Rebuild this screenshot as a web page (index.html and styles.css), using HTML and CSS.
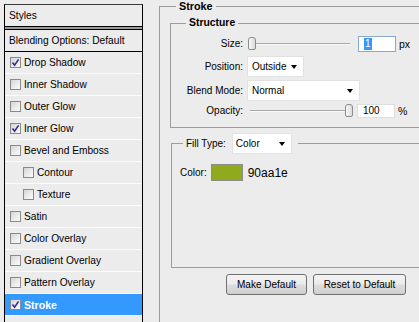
FILE: index.html
```html
<!DOCTYPE html>
<html>
<head>
<meta charset="utf-8">
<link rel="stylesheet" href="styles.css">
</head>
<body>
<div class="app">
  <div class="styles-panel">
    <div class="panel-head">Styles</div>
    <div class="head-rule"></div>
    <div class="blend-row">Blending Options: Default</div>
    <ul class="fx-list">
      <li class="fx"><span class="cb"><svg viewBox="0 0 9 9" class="tick"><path d="M1.5 4.5 L3.6 7.2 L7.6 1.4"/></svg></span>Drop Shadow</li>
      <li class="fx"><span class="cb"></span>Inner Shadow</li>
      <li class="fx"><span class="cb"></span>Outer Glow</li>
      <li class="fx"><span class="cb"><svg viewBox="0 0 9 9" class="tick"><path d="M1.5 4.5 L3.6 7.2 L7.6 1.4"/></svg></span>Inner Glow</li>
      <li class="fx"><span class="cb"></span>Bevel and Emboss</li>
      <li class="fx sub"><span class="cb"></span>Contour</li>
      <li class="fx sub"><span class="cb"></span>Texture</li>
      <li class="fx"><span class="cb"></span>Satin</li>
      <li class="fx"><span class="cb"></span>Color Overlay</li>
      <li class="fx"><span class="cb"></span>Gradient Overlay</li>
      <li class="fx"><span class="cb"></span>Pattern Overlay</li>
      <li class="fx selected"><span class="cb"><svg viewBox="0 0 9 9" class="tick"><path d="M1.5 4.5 L3.6 7.2 L7.6 1.4"/></svg></span>Stroke</li>
    </ul>
  </div>

  <div class="settings">
    <fieldset class="group stroke-group">
      <legend>Stroke</legend>

      <fieldset class="group structure">
        <legend>Structure</legend>
        <div class="form-grid">
          <label class="lbl">Size:</label>
          <div class="ctrl">
            <div class="slider"><div class="track"></div><div class="thumb" style="left:0px"></div></div>
            <div class="num focus size-num"><span class="sel">1</span></div>
            <span class="unit">px</span>
          </div>

          <label class="lbl">Position:</label>
          <div class="ctrl">
            <div class="select pos-select">Outside<span class="arrow"></span></div>
          </div>

          <label class="lbl">Blend Mode:</label>
          <div class="ctrl">
            <div class="select blend-select">Normal<span class="arrow"></span></div>
          </div>

          <label class="lbl">Opacity:</label>
          <div class="ctrl">
            <div class="slider"><div class="track"></div><div class="thumb opa" style="left:97px"></div></div>
            <div class="num opa-num">100</div>
            <span class="unit">%</span>
          </div>
        </div>
      </fieldset>

      <fieldset class="group fill">
        <legend><span class="legend-inner">Fill Type:<span class="select fill-select">Color<span class="arrow"></span></span></span></legend>
        <div class="color-row">
          <span class="lbl2">Color:</span>
          <span class="swatch"></span>
          <span class="hex">90aa1e</span>
        </div>
      </fieldset>

      <div class="buttons">
        <button class="btn make">Make Default</button>
        <button class="btn reset">Reset to Default</button>
      </div>
    </fieldset>
  </div>
</div>
</body>
</html>
```

FILE: styles.css
```css
html, body {
  margin: 0;
  padding: 0;
  overflow: hidden;
  background: #ececec;
}
body {
  width: 419px;
  height: 322px;
  font-family: "Liberation Sans", Arial, sans-serif;
  color: #000;
}
.app {
  display: flex;
  align-items: flex-start;
  height: 322px;
  overflow: hidden;
}

/* ---------- left styles list ---------- */
.styles-panel {
  flex: none;
  margin: 4px 0 0 4px;
  width: 139px;
  box-sizing: border-box;
  border: 1px solid #000;
  border-top-color: #3a3a3a;
  border-bottom: none;
  height: 318px;
  font-size: 10.2px;
  background: #ececec;
  white-space: nowrap;
}
.panel-head {
  height: 21px;
  line-height: 21px;
  padding-left: 4px;
}
.head-rule {
  height: 2px;
  background: #9a9a9a;
  border-top: 1px solid #000;
  border-bottom: 1px solid #000;
}
.blend-row {
  height: 21px;
  line-height: 21px;
  padding-left: 4px;
  border-bottom: 1px solid #000;
}
.fx-list {
  list-style: none;
  margin: 0;
  padding: 0;
}
.fx {
  height: 21px;
  border-bottom: 1px solid #fbfbfb;
  display: flex;
  align-items: center;
  padding-left: 5px;
}
.fx.sub {
  padding-left: 18px;
}
.fx.selected {
  background: #3399ff;
  color: #fff;
  font-weight: bold;
  font-size: 10.6px;
}
.cb {
  width: 11px;
  height: 11px;
  box-sizing: border-box;
  border: 1px solid #8a8a8a;
  background: linear-gradient(135deg, #d4d4d4 0%, #eeeeee 60%, #fafafa 100%);
  margin-right: 3px;
  display: flex;
  align-items: center;
  justify-content: center;
  flex: none;
}
.tick {
  width: 9px;
  height: 9px;
}
.tick path {
  fill: none;
  stroke: #2a2a9a;
  stroke-width: 1.6;
}

/* ---------- right settings ---------- */
.settings {
  flex: none;
  width: 276px;
  font-size: 10px;
  white-space: nowrap;
}
.group {
  border: 1px solid #9c9c9c;
  margin: 0;
  box-sizing: border-box;
  min-width: 0;
}
.group > legend {
  padding: 0 3px;
  line-height: 12px;
  height: 12px;
  font-weight: bold;
  font-size: 10.8px;
}
.stroke-group {
  margin-left: 16px;
  width: 320px;
  height: 330px;
  padding: 5px 0 0 10px;
}
.stroke-group > legend {
  margin-left: 6px;
}
.structure {
  width: 300px;
  padding: 4px 0 8px 0;
}
.structure > legend {
  margin-left: 15px;
  font-size: 10.4px;
}
.form-grid {
  display: grid;
  grid-template-columns: 72px auto;
  grid-template-rows: 21px 24px 24px 17px;
  column-gap: 4px;
}
.lbl {
  text-align: right;
  align-self: center;
  white-space: nowrap;
}
.ctrl {
  display: flex;
  align-items: center;
}
.slider {
  position: relative;
  width: 102px;
  height: 15px;
  margin-left: 1px;
  flex: none;
}
.track {
  position: absolute;
  left: 2px;
  right: 0;
  top: 7px;
  height: 0;
  border-top: 1px solid #a8a8a8;
  border-bottom: 1px solid #fafafa;
}
.thumb {
  position: absolute;
  top: 1px;
  width: 8px;
  height: 13px;
  box-sizing: border-box;
  border: 1px solid #8c8c8c;
  border-radius: 3px 3px 2px 2px;
  background: linear-gradient(to right, #f8f8f8, #dcdcdc);
}
.num {
  box-sizing: border-box;
  background: #fff;
  width: 38px;
  display: flex;
  align-items: center;
  padding-left: 5px;
  font-size: 10px;
  flex: none;
}
.size-num {
  height: 16px;
  margin-left: 8px;
  border: 1px solid #86a9d3;
}
.sel {
  background: #3399ff;
  color: #fff;
  padding: 0 1px;
  line-height: 12px;
}
.opa-num {
  height: 14px;
  margin-left: 7px;
  border: 1px solid #dedede;
}
.unit {
  margin-left: 3px;
  font-size: 10.5px;
}
.select {
  position: relative;
  box-sizing: border-box;
  height: 21px;
  background: #fff;
  border: 1px solid #e2e2e2;
  display: flex;
  align-items: center;
  padding-left: 4px;
  font-weight: normal;
  font-size: 10px;
  flex: none;
}
.pos-select { width: 57px; }
.blend-select { width: 113px; }
.arrow {
  position: absolute;
  right: 6px;
  top: 8px;
  width: 0;
  height: 0;
  border-left: 3.5px solid transparent;
  border-right: 3.5px solid transparent;
  border-top: 4px solid #000;
}

/* fill group */
.fill {
  width: 300px;
  margin: 5px 0 0 1px;
  padding: 0;
  height: 135px;
}
.fill > legend {
  height: 21px;
  line-height: 21px;
  margin-left: 11px;
  padding: 0 6px 0 3px;
  font-weight: normal;
  font-size: 10px;
}
.legend-inner {
  display: flex;
  align-items: center;
  height: 21px;
}
.fill-select {
  width: 60px;
  margin-left: 6px;
  padding-left: 3px;
}
.color-row {
  display: flex;
  align-items: center;
  padding: 10px 0 0 8px;
}
.swatch {
  width: 32px;
  height: 17px;
  box-sizing: border-box;
  border: 1px solid #8c8c8c;
  background: #90aa1e;
  margin-left: 4px;
}
.hex {
  margin-left: 5px;
  font-size: 12px;
}

/* buttons */
.buttons {
  display: flex;
  gap: 6px;
  margin: 6px 0 0 56px;
}
.btn {
  height: 21px;
  box-sizing: border-box;
  border: 1px solid #707070;
  border-radius: 3px;
  background: linear-gradient(#f4f4f4 0%, #ebebeb 48%, #dddddd 52%, #cfcfcf 100%);
  font-family: "Liberation Sans", Arial, sans-serif;
  font-size: 10px;
  color: #000;
  padding: 0;
  flex: none;
}
.make { width: 81px; }
.reset { width: 93px; }
```
